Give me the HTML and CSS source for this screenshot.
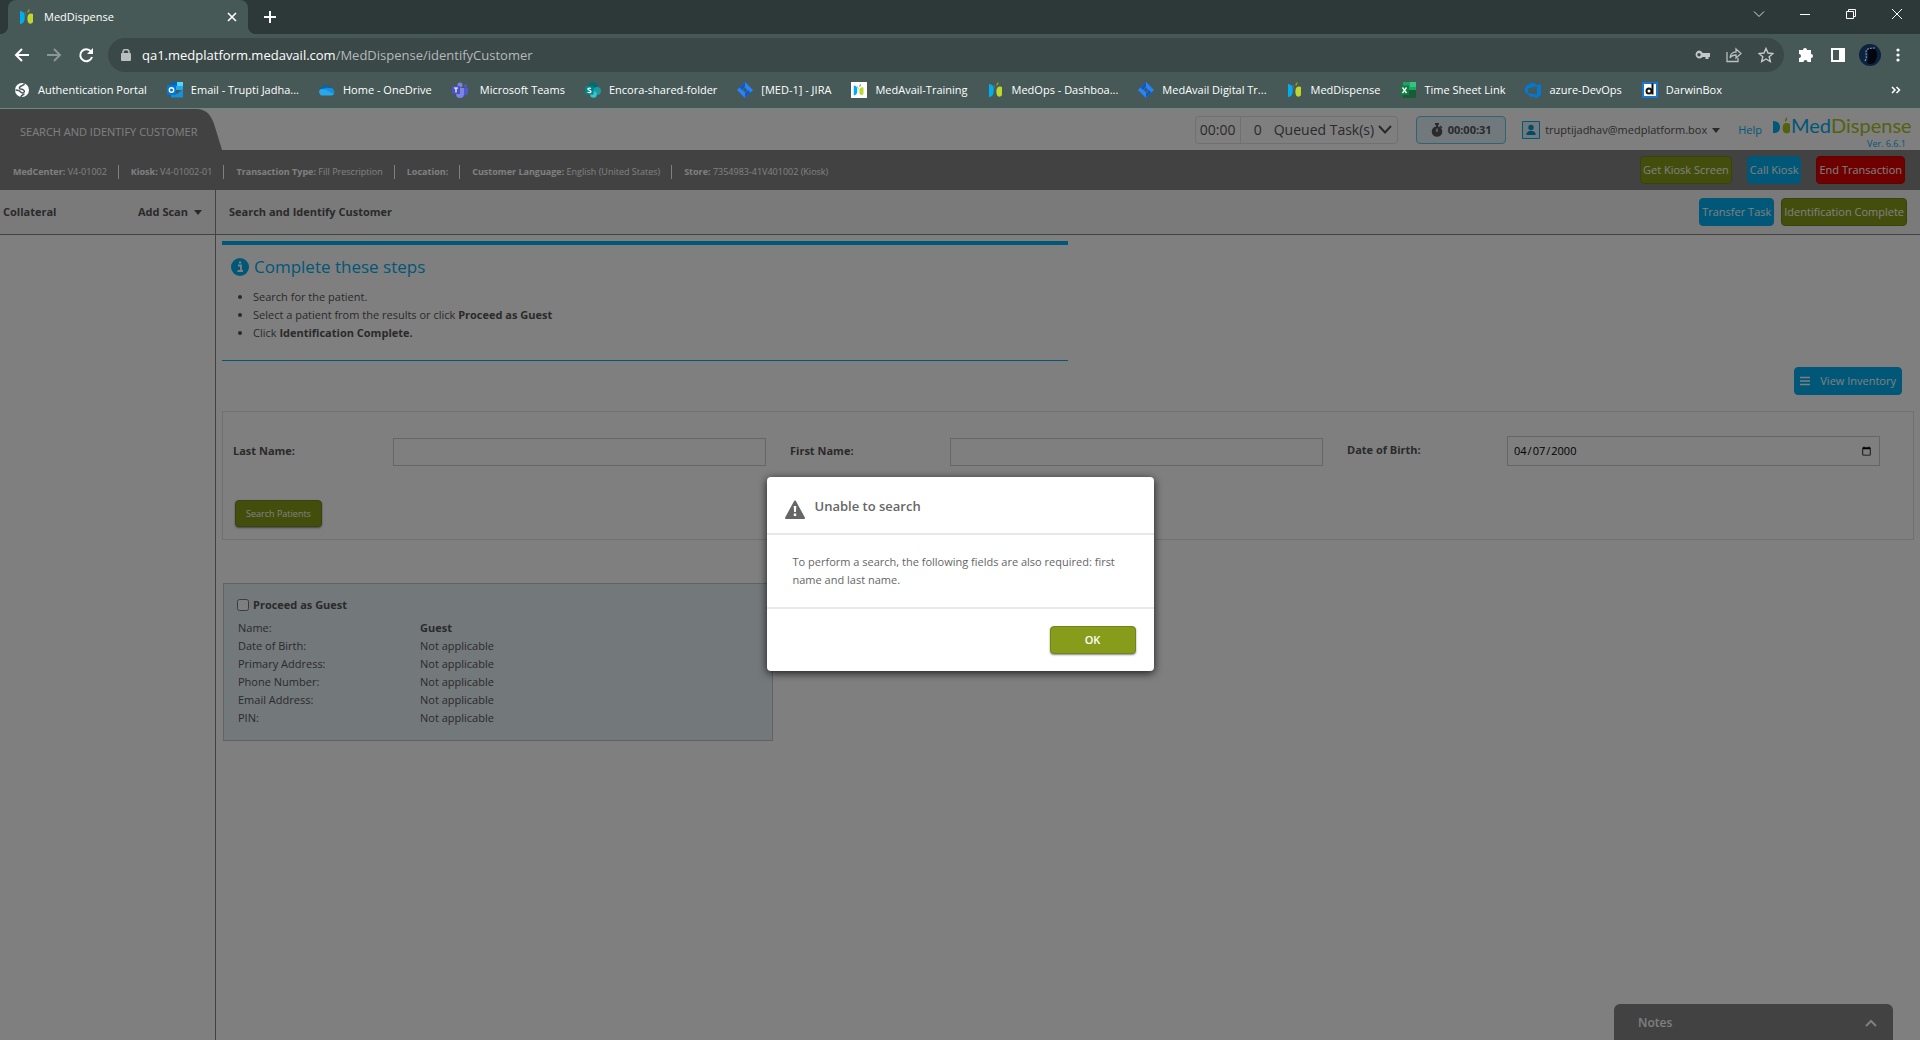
FILE: index.html
```html
<!DOCTYPE html>
<html lang="en">
<head>
<meta charset="utf-8">
<title>MedDispense</title>
<link rel="stylesheet" href="styles.css">
</head>
<body>
<svg class="defs" aria-hidden="true">
  <symbol id="med" viewBox="0 0 16 16">
    <path fill="#00aeef" d="M1 2c2 0 3 1 4 2 1 1.500 1 6.500 0 8.500C4.500 14 3 15 1 15z"/>
    <path fill="#bed730" d="M14 5v8c-1 2-3 2-4.500 1C8 12 8 7 9.500 5.500c1-1 3-1.500 4.500-.5z"/>
    <path fill="#8a9f1c" d="M8.500 4C8 2 9 .5 10.500 0c.3 2-.5 3.500-2 4z"/>
    <path fill="#6b8f8f" d="M6 3c1 1 1.500 3 1.300 5.500C7 6 6.500 4.500 5.500 3.500z"/>
  </symbol>
  <symbol id="jira" viewBox="0 0 16 16">
    <path fill="#2684ff" d="M8 0l8 8-8 8-8-8z"/>
    <path fill="#1558bc" d="M8 0v5L5 8 2.500 5.500zM8 16v-5l3-3 2.500 2.500z"/>
    <path fill="#465957" d="M8 5.500L10.500 8 8 10.500 5.500 8z"/>
  </symbol>
  <symbol id="caret" viewBox="0 0 8 5"><path fill="currentColor" d="M0 0h8L4 5z"/></symbol>
</svg>

<header class="browser">
  <div class="tabs">
    <div class="tab">
      <svg class="ico"><use href="#med"/></svg>
      <span class="tab-title">MedDispense</span>
      <button class="plain" aria-label="Close tab"><svg width="10" height="10" viewBox="0 0 10 10"><path d="M1 1l8 8M9 1L1 9" stroke="#fff" stroke-width="1.600"/></svg></button>
    </div>
    <button class="plain new-tab" aria-label="New tab"><svg width="12" height="12" viewBox="0 0 12 12"><path d="M6 0v12M0 6h12" stroke="#fff" stroke-width="2"/></svg></button>
    <div class="window-controls">
      <button class="plain" aria-label="Search tabs"><svg width="12" height="10" viewBox="0 0 12 10"><path d="M1 2.500l5 5 5-5" fill="none" stroke="#ddd"/></svg></button>
      <button class="plain" aria-label="Minimize"><svg width="12" height="10" viewBox="0 0 12 10"><path d="M1 5.500h10" stroke="#fff"/></svg></button>
      <button class="plain" aria-label="Restore"><svg width="12" height="10" viewBox="0 0 12 10"><path d="M1.500 2.500h7v7h-7zM3.500 2V.5h7v7H9" fill="none" stroke="#fff"/></svg></button>
      <button class="plain" aria-label="Close"><svg width="12" height="10" viewBox="0 0 12 10"><path d="M1 0l10 10M11 0L1 10" stroke="#fff"/></svg></button>
    </div>
  </div>
  <div class="toolbar">
    <button class="plain" aria-label="Back"><svg width="16" height="16" viewBox="0 0 16 16"><path d="M15 8H2M8 2L2 8l6 6" fill="none" stroke="#fff" stroke-width="2"/></svg></button>
    <button class="plain" aria-label="Forward"><svg width="16" height="16" viewBox="0 0 16 16"><path d="M1 8h13M8 2l6 6-6 6" fill="none" stroke="#8a9795" stroke-width="2"/></svg></button>
    <button class="plain" aria-label="Reload"><svg width="16" height="16" viewBox="0 0 16 16"><path d="M13 4.500A6 6 0 1 0 14 10" fill="none" stroke="#fff" stroke-width="2"/><path d="M15 1v6H9z" fill="#fff"/></svg></button>
    <div class="omnibox">
      <svg width="10" height="13" viewBox="0 0 10 13"><rect x="0" y="4" width="10" height="8" rx="1" fill="#b9bfbe"/><path d="M2 5V3a3 2.500 0 0 1 6 0v2" fill="none" stroke="#b9bfbe" stroke-width="1.500"/></svg>
      <span class="url"><b>qa1.medplatform.medavail.com</b>/MedDispense/identifyCustomer</span>
      <svg width="16" height="16" viewBox="0 0 16 16"><path fill="#c4c9c8" fill-rule="evenodd" d="M5 3.500a4 4 0 0 1 3.700 2.500H16v4h-1.500v2h-3v-2H8.700A4 4 0 1 1 5 3.500zM5 6a1.700 1.700 0 1 0 0 3.500A1.700 1.700 0 0 0 5 6z"/></svg>
      <svg width="16" height="16" viewBox="0 0 16 16"><path d="M1 5v9.500h11V11M4 11c0-4 3-6 6-6V2l5 4.500-5 4.500V8c-3 0-5 1-6 3z" fill="none" stroke="#b9bfbe" stroke-width="1.300"/></svg>
      <svg width="16" height="16" viewBox="0 0 16 16"><path d="M8 1.500l2 4.500 5 .5-3.800 3.200L12.300 14.500 8 12l-4.300 2.500 1.100-4.800L1 6.500 6 6z" fill="none" stroke="#c4c9c8" stroke-width="1.400"/></svg>
    </div>
    <button class="plain" aria-label="Extensions"><svg width="16" height="16" viewBox="0 0 16 16"><path fill="#fff" d="M5 3a2 2 0 0 1 4 0h4v4a2 2 0 0 1 0 4v4H9.500a2 2 0 0 0-4 0H1v-4a2 2 0 0 0 0-4V3z"/></svg></button>
    <button class="plain" aria-label="Side panel"><svg width="16" height="16" viewBox="0 0 16 16"><path fill="#fff" fill-rule="evenodd" d="M1 1h14v14H1zM3 3v10h6V3z"/></svg></button>
    <button class="plain profile" aria-label="Profile"><svg width="22" height="22" viewBox="0 0 22 22"><circle cx="11" cy="11" r="11" fill="#0c2340"/><path d="M8 5c3-2 7-2 9 1 2 4 1 8-1 12-3 3-5 2-8 1 2-5 2-9 0-14z" fill="#02060f"/><path d="M6 17c2-3 1-6 1-9 0-3 3-4 9-4" fill="none" stroke="#7f97b8" stroke-width="1.200" stroke-dasharray="2 1"/></svg></button>
    <button class="plain" aria-label="Menu"><svg width="4" height="14" viewBox="0 0 4 14"><g fill="#fff"><circle cx="2" cy="2" r="1.600"/><circle cx="2" cy="7" r="1.600"/><circle cx="2" cy="12" r="1.600"/></g></svg></button>
  </div>
  <nav class="bookmarks">
    <a href="#"><svg class="ico" viewBox="0 0 16 16"><circle cx="8" cy="8" r="7" fill="#fff"/><path d="M10.500 1.500C10 4 6 3.500 5.500 5.500 5 7.500 8 7 9.500 8s1 3-1 3-2-2-4-2.500L1.500 8M7 15c0-2 2-2 3.500-3" fill="none" stroke="#465957" stroke-width="1.500"/></svg>Authentication Portal</a>
    <a href="#"><svg class="ico" viewBox="0 0 16 16"><path fill="#28a8ea" d="M4 0h12v8H4z"/><path fill="#0364b8" d="M4 0h6v4H4z"/><path fill="#50d9ff" d="M10 0h6v4h-6z"/><path fill="#1490df" d="M4 8l6 4 6-5v8.500H4z"/><path fill="#0078d4" d="M0 3h9v10H0z"/><circle cx="4.500" cy="8" r="2.200" fill="none" stroke="#fff" stroke-width="1.400"/></svg>Email - Trupti Jadha...</a>
    <a href="#"><svg class="ico" viewBox="0 0 16 16"><path fill="#0364b8" d="M2 8a5 5 0 0 1 9.500-2L8 10z"/><path fill="#1490df" d="M11 6a4 4 0 0 1 3 7L4 7c3-2 5-1 7-1z"/><path fill="#28a8ea" d="M1 12a3 3 0 0 1 3-5c3 0 6 3 11 5-1 1-2 1.500-3 1.500H3A2 2 0 0 1 1 12z"/></svg>Home - OneDrive</a>
    <a href="#"><svg class="ico" viewBox="0 0 16 16"><circle cx="8" cy="3" r="2.500" fill="#7b83eb"/><circle cx="13.500" cy="4" r="1.700" fill="#5059c9"/><path fill="#7b83eb" d="M4 6h8v6a4 4 0 0 1-8 0z"/><path fill="#5059c9" d="M12 6h4v5a3 3 0 0 1-4 2z"/><path fill="#4b53bc" d="M0 4h8v8H0z"/><path d="M2 6h4M4 6v4.500" stroke="#fff" stroke-width="1.200"/></svg><span class="wide">Microsoft Teams</span></a>
    <a href="#"><svg class="ico" viewBox="0 0 16 16"><circle cx="8" cy="4.500" r="4.500" fill="#036c70"/><circle cx="12" cy="9" r="4" fill="#1a9ba1"/><circle cx="8.500" cy="12.500" r="3.300" fill="#37c6d0"/><path fill="#038387" d="M0 4h8.500v8.500H0z"/><path d="M6 6.500C4 5.500 2.500 6.500 3 7.500s3 .7 3 2S4 11 2.500 10" fill="none" stroke="#fff" stroke-width="1.200"/></svg>Encora-shared-folder</a>
    <a href="#"><svg class="ico"><use href="#jira"/></svg>[MED-1] - JIRA</a>
    <a href="#"><svg class="ico" viewBox="0 0 16 16"><path fill="#fff" d="M0 0h16v16H0z"/><use href="#med" x="2" y="2" width="12" height="12"/></svg>MedAvail-Training</a>
    <a href="#"><svg class="ico"><use href="#med"/></svg>MedOps - Dashboa...</a>
    <a href="#"><svg class="ico"><use href="#jira"/></svg>MedAvail Digital Tr...</a>
    <a href="#"><svg class="ico"><use href="#med"/></svg>MedDispense</a>
    <a href="#"><svg class="ico" viewBox="0 0 16 16"><path fill="#21a366" d="M3 0h13v8H3z"/><path fill="#33c481" d="M10 0h6v5h-6z"/><path fill="#185c37" d="M3 8h13v8H3z"/><path fill="#107c41" d="M0 3.500h9v9.500H0z"/><path d="M2.500 5.500l4 5.500M6.500 5.500l-4 5.500" stroke="#fff" stroke-width="1.300"/></svg>Time Sheet Link</a>
    <a href="#"><svg class="ico" viewBox="0 0 16 16"><path fill="#0078d4" fill-rule="evenodd" d="M0 6l2-3 5-2V0l5 3 4-1v11l-4 3-6-2v2l-3-4-3-1zm3 .5V11l9 1.500V4z"/></svg>azure-DevOps</a>
    <a href="#"><svg class="ico" viewBox="0 0 16 16"><path fill="#fff" stroke="#1976d2" stroke-width="2" d="M1 1h14v14H1z"/><circle cx="7" cy="9" r="2.500" fill="none" stroke="#111" stroke-width="2"/><path d="M10.500 1.500V12.500" stroke="#111" stroke-width="2"/></svg>DarwinBox</a>
    <button class="plain more" aria-label="More bookmarks"><svg width="10" height="8" viewBox="0 0 10 8"><path d="M1 1l3 3-3 3M5.500 1l3 3-3 3" fill="none" stroke="#fff" stroke-width="1.500"/></svg></button>
  </nav>
</header>

<div class="app">
  <div class="topbar">
    <div class="page-tab">SEARCH AND IDENTIFY CUSTOMER</div>
    <svg class="page-tab-edge" viewBox="0 0 26 41"><path fill="#848484" d="M0 0c12 0 16 8 19 18l7 23H0z"/></svg>
    <div class="queue">
      <span class="queue-time">00:00</span>
      <button class="queue-button"><span>0</span><span>Queued Task(s)</span><svg width="14" height="9" viewBox="0 0 14 9"><path d="M1 1l6 6.500L13 1" fill="none" stroke="#555" stroke-width="2"/></svg></button>
    </div>
    <div class="timer"><svg width="12" height="14" viewBox="0 0 12 14"><circle cx="6" cy="8.500" r="5.300" fill="#555"/><path d="M4 0h4v2H7v2H5V2H4zM9.500 2.500l2 2-1 1-2-2z" fill="#555"/><path d="M6 5.500V9" stroke="#e0f0f8" stroke-width="1.300"/></svg>00:00:31</div>
    <button class="plain user"><svg width="18" height="18" viewBox="0 0 18 18"><path fill="#e3f3fa" stroke="#00aeef" d="M.5.500h17v17H.5z"/><circle cx="9" cy="6.500" r="2.700" fill="#0098d0"/><path d="M4.500 14v-2L7 10h4l2.500 2v2z" fill="#0098d0"/></svg>truptijadhav@medplatform.box<svg class="caret"><use href="#caret"/></svg></button>
    <a class="help" href="#">Help</a>
    <div class="brand">
      <div class="brand-name"><svg width="17" height="18" viewBox="0 0 17 18"><path fill="#00aeef" d="M0 5c4 0 7 2 7 6s-2 6-7 6z"/><path fill="#a9c31f" d="M17 8v8c-2 2-6 2-7-1-1-4 0-8 3-8 2 0 3 0 4 1zM12 6c-.5-2 .5-4 2-5 .5 2 0 4-2 5z"/></svg><span class="brand-med">Med</span><span class="brand-dispense">Dispense</span></div>
      <div class="version">Ver. 6.6.1</div>
    </div>
  </div>

  <div class="infobar">
    <ul class="facts">
      <li><b>MedCenter:</b> V4-01002</li>
      <li><b>Kiosk:</b> V4-01002-01</li>
      <li><b>Transaction Type:</b> Fill Prescription</li>
      <li><b>Location:</b></li>
      <li><b>Customer Language:</b> English (United States)</li>
      <li><b>Store:</b> 7354983-41V401002 (Kiosk)</li>
    </ul>
    <button class="btn green">Get Kiosk Screen</button>
    <button class="btn blue">Call Kiosk</button>
    <button class="btn red">End Transaction</button>
  </div>

  <div class="columns">
    <aside class="sidebar">
      <div class="bar"><h2>Collateral</h2><button class="plain add-scan">Add Scan<svg class="caret"><use href="#caret"/></svg></button></div>
    </aside>
    <main class="main">
      <div class="bar"><h1>Search and Identify Customer</h1><button class="btn blue">Transfer Task</button><button class="btn green">Identification Complete</button></div>
      <div class="content">
        <section class="steps">
          <h2><svg width="18" height="18" viewBox="0 0 18 18"><circle cx="9" cy="9" r="9" fill="#00aeef"/><path d="M7 7.500h3V13M6.500 13h5.500" fill="none" stroke="#fff" stroke-width="1.800"/><path d="M8 3.500h2.200v2H8z" fill="#fff"/></svg>Complete these steps</h2>
          <ul>
            <li>Search for the patient.</li>
            <li>Select a patient from the results or click <b>Proceed as Guest</b></li>
            <li>Click <b>Identification Complete.</b></li>
          </ul>
        </section>
        <div class="inventory"><button class="btn blue"><svg width="10" height="10" viewBox="0 0 10 10"><path d="M0 1.500h10M0 5h10M0 8.500h10" stroke="#fff" stroke-width="1.300"/></svg>View Inventory</button></div>
        <form class="search">
          <div class="fields">
            <div class="field"><label for="last">Last Name:</label><input id="last" type="text"></div>
            <div class="field"><label for="first">First Name:</label><input id="first" type="text"></div>
            <div class="field"><label for="dob">Date of Birth:</label><input id="dob" type="date" value="2000-04-07"></div>
          </div>
          <button type="button" class="btn green search-button">Search Patients</button>
        </form>
        <section class="guest">
          <div class="guest-check"><input id="guest" type="checkbox"><label for="guest">Proceed as Guest</label></div>
          <dl>
            <dt>Name:</dt><dd><b>Guest</b></dd>
            <dt>Date of Birth:</dt><dd>Not applicable</dd>
            <dt>Primary Address:</dt><dd>Not applicable</dd>
            <dt>Phone Number:</dt><dd>Not applicable</dd>
            <dt>Email Address:</dt><dd>Not applicable</dd>
            <dt>PIN:</dt><dd>Not applicable</dd>
          </dl>
        </section>
      </div>
    </main>
  </div>

  <button class="notes">Notes<svg width="12" height="8" viewBox="0 0 12 8"><path d="M1 7l5-5 5 5" fill="none" stroke="#fff" stroke-width="2"/></svg></button>

  <div class="overlay">
    <div class="dialog" role="alertdialog" aria-labelledby="dialog-title">
      <div class="dialog-head"><svg width="20" height="19" viewBox="0 0 20 19"><path fill="#666" stroke="#666" stroke-width="2" stroke-linejoin="round" d="M10 1.500L19 18H1z"/><path fill="#fff" d="M8.700 6h2.600l-.4 6H9.100zM8.800 13.500h2.400V16H8.800z"/></svg><h2 id="dialog-title">Unable to search</h2></div>
      <p>To perform a search, the following fields are also required: first name and last name.</p>
      <div class="dialog-foot"><button class="btn green">OK</button></div>
    </div>
  </div>
</div>
</body>
</html>
```
FILE: styles.css
```css
* { box-sizing: border-box; }

body {
  margin: 0;
  min-height: 100vh;
  display: flex;
  flex-direction: column;
  font: 11px/18px "Open Sans", sans-serif;
  color: #555;
}

h1, h2, p, ul, dl, dd { margin: 0; padding: 0; }
svg { flex: none; display: block; }
button, input { font: inherit; color: inherit; }

.defs { position: absolute; width: 0; height: 0; }
.ico { width: 16px; height: 16px; }
.caret { width: 8px; height: 5px; margin-top: 2px; }

.plain {
  display: flex;
  align-items: center;
  padding: 0;
  border: 0;
  background: none;
}

/* Browser chrome */
.browser { background: #465957; color: #fff; border-bottom: 1px solid #6c8785; }

.tabs {
  display: flex;
  align-items: center;
  height: 34px;
  padding-left: 8px;
  background: #2c3938;
}

.tab {
  position: relative;
  display: flex;
  align-items: center;
  gap: 9px;
  width: 240px;
  height: 34px;
  padding: 0 11px;
  border-radius: 8px 8px 0 0;
  background: #465957;
}
.tab::before, .tab::after {
  content: "";
  position: absolute;
  bottom: 0;
  width: 8px;
  height: 8px;
}
.tab::before { left: -8px; background: radial-gradient(circle at 0 0, #2c3938 8px, #465957 8px); }
.tab::after { right: -8px; background: radial-gradient(circle at 100% 0, #2c3938 8px, #465957 8px); }
.tab-title { flex: 1; }
.new-tab { margin-left: 16px; }

.window-controls {
  display: flex;
  gap: 34px;
  margin-left: auto;
  padding: 0 17px 6px 0;
}

.toolbar {
  display: flex;
  align-items: center;
  gap: 16px;
  height: 42px;
  padding: 0 20px 0 14px;
}

.omnibox {
  flex: 1;
  display: flex;
  align-items: center;
  gap: 16px;
  height: 34px;
  margin-left: -2px;
  margin-right: -2px;
  padding: 0 10px 0 13px;
  border-radius: 17px;
  background: #3b4848;
  color: #b3bab9;
  font-size: 13px;
}
.url { flex: 1; margin-left: -5px; }
.url b { font-weight: 400; color: #fff; }
.profile { margin: 0 -1px 0 -3px; }

.bookmarks {
  display: flex;
  align-items: center;
  gap: 20px;
  height: 32px;
  padding: 0 19px 4px 14px;
}
.bookmarks a {
  display: flex;
  align-items: center;
  gap: 8px;
  color: #fff;
  text-decoration: none;
  white-space: nowrap;
}
.wide { margin-left: 4px; }
.more { margin-left: auto; }

/* Application */
.app {
  position: relative;
  flex: 1;
  display: flex;
  flex-direction: column;
  background: #fff;
}

.btn {
  display: inline-flex;
  align-items: center;
  justify-content: center;
  height: 28px;
  padding: 0 2px;
  border: 1px solid;
  border-radius: 4px;
  color: #fff;
  white-space: nowrap;
}
.green { background: #879c1a; border-color: #71851a; }
.blue { background: #00aeef; border-color: #00aeef; }
.red { background: #dd0000; border-color: #c80000; }

.topbar { display: flex; align-items: center; height: 41px; padding-right: 12px; }
.page-tab {
  width: 196px;
  height: 41px;
  padding: 2px 0 0 20px;
  line-height: 41px;
  background: #848484;
  color: #fff;
  white-space: nowrap;
  position: relative;
  z-index: 1;
}
.page-tab-edge { width: 26px; height: 41px; }

.queue {
  display: flex;
  height: 28px;
  margin-left: auto;
  border: 1px solid #e0e0e0;
  border-radius: 4px;
  font-size: 14px;
}
.queue-time { width: 45px; line-height: 26px; text-align: center; border-right: 1px solid #e0e0e0; }
.queue-button {
  display: flex;
  align-items: center;
  gap: 4px;
  padding: 0 5px 0 13px;
  border: 0;
  background: none;
}
.queue-button span:first-child { margin-right: 8px; }

.timer {
  display: flex;
  align-items: center;
  justify-content: center;
  gap: 5px;
  width: 90px;
  height: 28px;
  margin: 0 16px 0 18px;
  border: 1px solid #62c4ea;
  border-radius: 4px;
  background: #e3f3fa;
  font-weight: 700;
}
.user { gap: 5px; }
.help { margin: 0 11px 0 18px; color: #00aeef; text-decoration: none; }

.brand { width: 135px; padding-top: 2px; }
.brand-name { display: flex; align-items: center; height: 26px; font: 400 20px/26px Lato, sans-serif; }
.brand-med { margin-left: 1px; color: #00aeef; }
.brand-dispense { color: #a9c31f; }
.version { padding-right: 2px; font-size: 9px; line-height: 12px; text-align: right; color: #00aeef; }

.infobar {
  display: flex;
  align-items: center;
  gap: 15px;
  height: 40px;
  padding-right: 15px;
  background: #848484;
  color: #fff;
}
.facts { flex: 1; display: flex; padding: 3px 0 0 1px; font-size: 9px; line-height: 14px; list-style: none; }
.facts li { padding: 0 11px 0 12px; }
.facts li + li { border-left: 1px solid #fff; }
.infobar .btn { margin-bottom: 1px; }

.columns { flex: 1; display: flex; }
.sidebar { width: 216px; border-right: 1px solid #848484; }
.main { flex: 1; min-width: 0; }
.bar {
  display: flex;
  align-items: center;
  gap: 7px;
  height: 45px;
  padding: 0 13px 1px 3px;
  border-bottom: 1px solid #848484;
  background: #f4f4f4;
}
.bar h1, .bar h2 { flex: 1; font-size: 11px; font-weight: 700; }
.main .bar { padding-left: 13px; }
.add-scan { gap: 6px; font-weight: 700; }

.content { padding: 6px 6px 40px; }

.steps {
  width: 50%;
  height: 120px;
  padding: 11px 9px;
  border-top: 4px solid #00aeef;
  border-bottom: 1px solid #00aeef;
}
.steps h2 { display: flex; align-items: center; gap: 5px; font-size: 17px; font-weight: 400; line-height: 22px; color: #00aeef; }
.steps ul { margin-top: 10px; padding-left: 22px; }

.inventory { display: flex; justify-content: flex-end; padding: 6px 12px 16px; }
.inventory .btn { gap: 10px; padding: 0 5px; }

.search {
  height: 129px;
  padding: 24px 33px 0 10px;
  border: 1px solid #e3e3e3;
}
.fields { display: flex; align-items: flex-end; gap: 24px; }
.field { flex: 1; display: flex; align-items: center; }
.field label { width: 160px; padding-bottom: 2px; font-weight: 700; }
.field input {
  flex: 1;
  min-width: 0;
  height: 28px;
  padding: 0 5px;
  border: 1px solid #ccc;
  background: #fff;
  color: #000;
}
.field input[type="date"] { height: 30px; }
.search-button { height: 27px; width: 87px; margin: 34px 0 0 2px; font-size: 9px; box-shadow: 0 1px 2px #888; }

.guest {
  width: 550px;
  max-width: 100%;
  height: 158px;
  margin: 43px 0 0 1px;
  padding: 12px 13px;
  border: 1px solid #c4c4c4;
  background: #e6f1f7;
}
.guest-check { display: flex; align-items: center; gap: 4px; font-weight: 700; }
.guest-check input { width: 12px; height: 12px; margin: 0; }
.guest dl { display: grid; grid-template-columns: 182px 1fr; margin-top: 5px; padding-left: 1px; }

.notes {
  position: absolute;
  right: 27px;
  bottom: 0;
  display: flex;
  align-items: center;
  justify-content: space-between;
  width: 279px;
  height: 36px;
  padding: 2px 16px 0 24px;
  border: 0;
  border-radius: 6px 6px 0 0;
  background: #848484;
  color: #fff;
  font-size: 12px;
  font-weight: 600;
}

.overlay {
  position: absolute;
  inset: 0;
  z-index: 2;
  display: flex;
  align-items: center;
  justify-content: center;
  padding-bottom: 2px;
  background: rgba(0, 0, 0, .5);
}
.dialog {
  width: 387px;
  border-radius: 4px;
  background: #fff;
  color: #666;
  box-shadow: 0 2px 8px rgba(0, 0, 0, .8);
}
.dialog-head { display: flex; gap: 10px; padding: 20px 18px 14px; }
.dialog-head svg { margin-top: 3px; }
.dialog-head h2 { font-size: 13px; font-weight: 600; }
.dialog p { padding: 18px 26px; border: solid #e8e8e8; border-width: 2px 0; }
.dialog-foot { display: flex; justify-content: flex-end; padding: 17px 18px; }
.dialog-foot .btn { width: 86px; font-weight: 600; box-shadow: 0 1px 2px #888; }
```
